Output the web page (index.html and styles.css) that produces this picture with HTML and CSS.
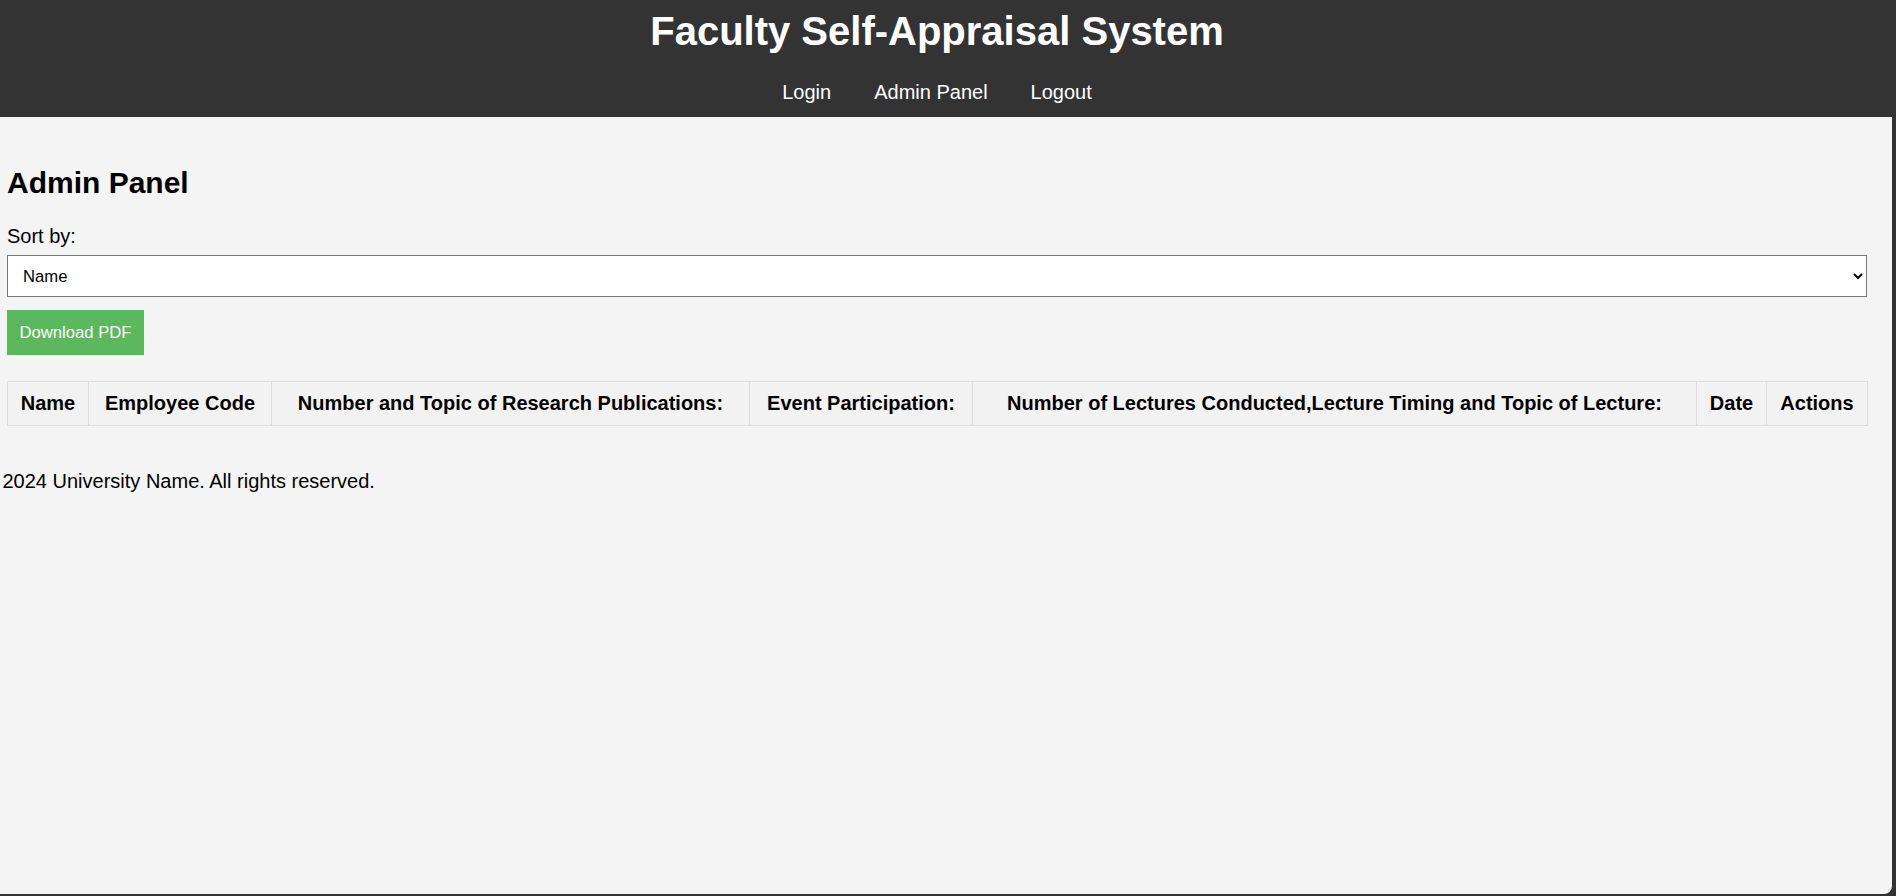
FILE: index.html
```html
<!DOCTYPE html>
<html lang="en">
<head>
<meta charset="utf-8">
<title>Faculty Self-Appraisal System - Admin Panel</title>
<link rel="stylesheet" href="styles.css">
</head>
<body>
<div class="window">
  <header class="site-header">
    <h1 class="site-title">Faculty Self-Appraisal System</h1>
    <nav class="site-nav">
      <a href="#" class="nav-link">Login</a>
      <a href="#" class="nav-link">Admin Panel</a>
      <a href="#" class="nav-link">Logout</a>
    </nav>
  </header>
  <div class="page">
    <main class="main">
      <h2 class="panel-title">Admin Panel</h2>
      <label class="sort-label" for="sort">Sort by:</label>
      <select id="sort" class="sort-select">
        <option>Name</option>
        <option>Employee Code</option>
        <option>Date</option>
      </select>
      <button class="btn-download" type="button">Download PDF</button>
      <table class="data-table">
        <thead>
          <tr>
            <th class="col-name">Name</th>
            <th class="col-code">Employee Code</th>
            <th class="col-research">Number and Topic of Research Publications:</th>
            <th class="col-event">Event Participation:</th>
            <th class="col-lectures">Number of Lectures Conducted,Lecture Timing and Topic of Lecture:</th>
            <th class="col-date">Date</th>
            <th class="col-actions">Actions</th>
          </tr>
        </thead>
        <tbody></tbody>
      </table>
    </main>
    <footer class="footer">2024 University Name. All rights reserved.</footer>
  </div>
</div>
</body>
</html>
```

FILE: styles.css
```css
* { box-sizing: border-box; }

html, body {
  margin: 0;
  padding: 0;
}

body {
  background: #333333;
  font-family: "Liberation Sans", Arial, sans-serif;
  color: #000;
}

.window {
  display: flex;
  flex-direction: column;
  min-height: 896px;
}

.site-header {
  background: #333333;
  color: #fff;
  height: 117px;
  padding: 8px 22px 0 0;
  text-align: center;
}

.site-title {
  margin: 0 0 26.5px;
  font-size: 40px;
  font-weight: bold;
  line-height: 46px;
}

.site-nav {
  display: flex;
  justify-content: center;
  gap: 43px;
  line-height: 23px;
}

.nav-link {
  color: #fff;
  text-decoration: none;
  font-size: 20px;
}

.page {
  flex: 1;
  background: #f4f4f4;
  margin: 0 4px 2px 0;
  border-bottom-right-radius: 8px;
}

.main {
  width: 1874px;
  padding: 48.5px 7px 0;
}

.panel-title {
  margin: 0 0 24.5px;
  font-size: 30px;
  font-weight: bold;
  line-height: 34.5px;
}

.sort-label {
  display: block;
  font-size: 20px;
  line-height: 23px;
  margin-bottom: 7.5px;
}

.sort-select {
  display: block;
  width: 100%;
  height: 42px;
  font-family: "Liberation Sans", Arial, sans-serif;
  font-size: 16.67px;
  color: #000;
  background-color: #fff;
  border: 1px solid #767676;
  border-radius: 0;
  padding: 0 8px 0 11px;
}

.btn-download {
  display: block;
  margin-top: 13px;
  height: 45px;
  padding: 0 12.5px;
  background: #5cb85c;
  color: #fff;
  border: none;
  font-family: "Liberation Sans", Arial, sans-serif;
  font-size: 16.67px;
  cursor: pointer;
}

.data-table {
  width: 1860px;
  margin-top: 25.5px;
  border-collapse: collapse;
  table-layout: fixed;
}

.data-table th {
  background: #f2f2f2;
  border: 1px solid #dddddd;
  padding: 10px 6px;
  font-size: 20px;
  line-height: 23px;
  font-weight: bold;
  text-align: center;
  white-space: nowrap;
}

.col-name { width: 81px; }
.col-code { width: 183px; }
.col-research { width: 478px; }
.col-event { width: 223px; }
.col-lectures { width: 724px; }
.col-date { width: 70px; }
.col-actions { width: 101px; }

.footer {
  margin-top: 44.5px;
  padding-left: 2.5px;
  font-size: 20px;
  line-height: 23px;
}
```
